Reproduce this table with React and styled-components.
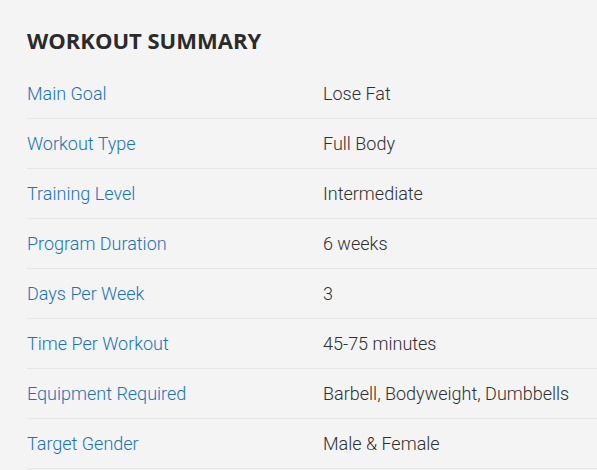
import React from "react";
import styled, { createGlobalStyle } from "styled-components";

const GlobalStyle = createGlobalStyle`
  html, body {
    margin: 0;
    padding: 0;
    background: #f4f4f4;
  }
`;

const Wrapper = styled.div`
  padding: 24px 0 0 27px;
  font-family: Roboto, "Liberation Sans", sans-serif;
`;

const Title = styled.h2`
  margin: 0 0 13px;
  font-family: "Open Sans", "Liberation Sans", sans-serif;
  font-weight: 700;
  font-size: 22px;
  line-height: 32px;
  color: #2b2b2b;
`;

const Row = styled.div`
  display: grid;
  grid-template-columns: 296px 1fr;
  align-items: center;
  height: 49px;
  border-bottom: 1px solid #e6e6e6;
  font-size: 18px;
  font-weight: 300;
`;

const Label = styled.span`
  color: #1a72bd;
`;

const Value = styled.span`
  color: #2f2f2f;
`;

const summary = [
  ["Main Goal", "Lose Fat"],
  ["Workout Type", "Full Body"],
  ["Training Level", "Intermediate"],
  ["Program Duration", "6 weeks"],
  ["Days Per Week", "3"],
  ["Time Per Workout", "45-75 minutes"],
  ["Equipment Required", "Barbell, Bodyweight, Dumbbells"],
  ["Target Gender", "Male & Female"],
];

const App = () => {
  return (
    <>
      <GlobalStyle />
      <Wrapper>
        <Title>WORKOUT SUMMARY</Title>
        {summary.map(([label, value]) => (
          <Row key={label}>
            <Label>{label}</Label>
            <Value>{value}</Value>
          </Row>
        ))}
      </Wrapper>
    </>
  );
};

export default App;
